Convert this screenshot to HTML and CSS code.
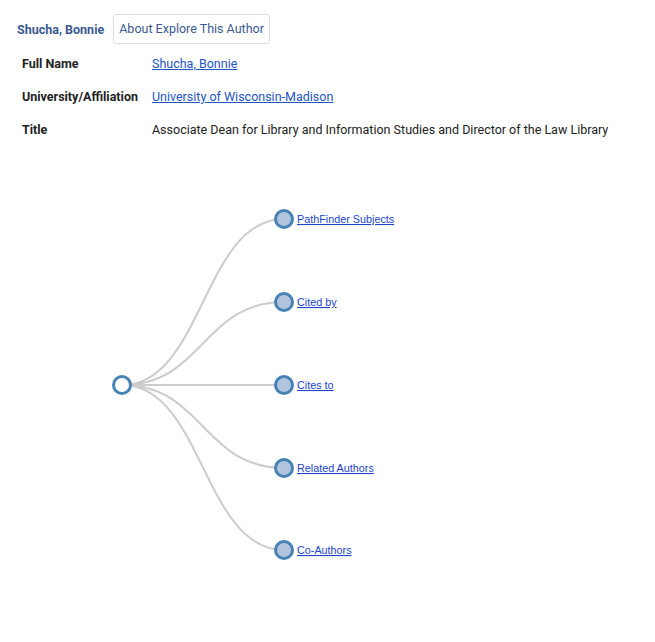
FILE: index.html
```html
<!DOCTYPE html>
<html lang="en">
<head>
    <meta charset="UTF-8">
    <title>Shucha, Bonnie</title>
    <link rel="stylesheet" href="styles.css">
</head>
<body>

    <div class="author-header">
        <span class="author-name">Shucha, Bonnie</span>
        <span class="author-tab">About Explore This Author</span>
    </div>

    <table class="author-info">
        <tr>
            <th>Full Name</th>
            <td><a href="#">Shucha, Bonnie</a></td>
        </tr>
        <tr>
            <th>University/Affiliation</th>
            <td><a href="#">University of Wisconsin-Madison</a></td>
        </tr>
        <tr>
            <th>Title</th>
            <td>Associate Dean for Library and Information Studies and Director of the Law Library</td>
        </tr>
    </table>

    <!-- explore tree -->
    <div class="tree-box">
        <svg class="tree" width="655" height="460" viewBox="0 150 655 460">
            <g class="links">
                <path d="M122,385 C203,385 203,219 284,219"></path>
                <path d="M122,385 C203,385 203,302 284,302"></path>
                <path d="M122,385 C203,385 203,385 284,385"></path>
                <path d="M122,385 C203,385 203,468 284,468"></path>
                <path d="M122,385 C203,385 203,550 284,550"></path>
            </g>
            <g class="node root">
                <circle cx="122" cy="385" r="8.5"></circle>
            </g>
            <g class="node">
                <circle cx="284" cy="219" r="8.5"></circle>
                <a href="#"><text x="297" y="223">PathFinder Subjects</text></a>
            </g>
            <g class="node">
                <circle cx="284" cy="302" r="8.5"></circle>
                <a href="#"><text x="297" y="306">Cited by</text></a>
            </g>
            <g class="node">
                <circle cx="284" cy="385" r="8.5"></circle>
                <a href="#"><text x="297" y="389">Cites to</text></a>
            </g>
            <g class="node">
                <circle cx="284" cy="468" r="8.5"></circle>
                <a href="#"><text x="297" y="472">Related Authors</text></a>
            </g>
            <g class="node">
                <circle cx="284" cy="550" r="8.5"></circle>
                <a href="#"><text x="297" y="554">Co-Authors</text></a>
            </g>
        </svg>
    </div>

</body>
</html>
```

FILE: styles.css
```css
body {
    font-family: Roboto, "Liberation Sans", Arial, sans-serif;
    font-size: 12.5px;
    color: #222;
    background-color: #fff;
    margin: 0;
}

.author-header {
    display: flex;
    align-items: center;
    gap: 9px;
    padding: 14px 0 0 17px;
}

.author-name {
    font-weight: bold;
    color: #3b5a92;
}

.author-tab {
    color: #3b5a92;
    border: 1px solid #ddd;
    border-radius: 3px;
    padding: 6px 5px 7px 5px;
}

.author-info {
    border-collapse: collapse;
    margin: 5px 0 0 16px;
}

.author-info th {
    text-align: left;
    font-weight: bold;
    color: #222;
    padding: 7px 14px 11px 6px;
    vertical-align: top;
}

.author-info td {
    padding: 7px 6px 11px 0;
    vertical-align: top;
}

.author-info a {
    color: #2255c4;
}

.tree-box {
    position: absolute;
    left: 0;
    top: 150px;
}

.tree .links path {
    fill: none;
    stroke: #ccc;
    stroke-width: 2px;
}

.tree circle {
    fill: #b0c4de;
    stroke: #4682b4;
    stroke-width: 3px;
}

.tree .root circle {
    fill: #fff;
}

.tree text {
    font-family: "Liberation Sans", Arial, sans-serif;
    font-size: 10.8px;
    fill: #2244cc;
    text-decoration: underline;
}
```
